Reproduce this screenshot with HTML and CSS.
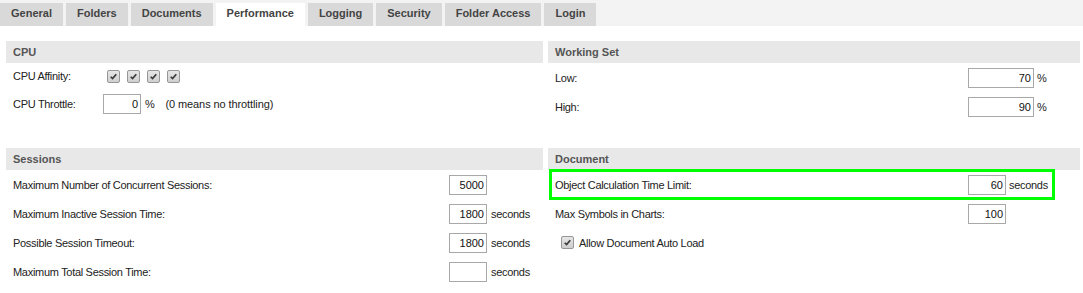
FILE: index.html
```html
<!DOCTYPE html>
<html lang="en">
<head>
    <meta charset="UTF-8">
    <title>Performance</title>
    <link rel="stylesheet" href="styles.css">
</head>
<body>
    <!-- Tabs -->
    <div class="tabs">
        <div class="tab">General</div>
        <div class="tab">Folders</div>
        <div class="tab">Documents</div>
        <div class="tab active">Performance</div>
        <div class="tab">Logging</div>
        <div class="tab">Security</div>
        <div class="tab">Folder Access</div>
        <div class="tab">Login</div>
    </div>

    <div class="panels">
        <!-- CPU -->
        <div class="panel panel-cpu">
            <h2 class="panel-title">CPU</h2>
            <div class="row row-short">
                <span class="label">CPU Affinity:</span>
                <div class="checks">
                    <span class="check"><svg viewBox="0 0 13 13"><path d="M3.2 6.8 L5.4 9 L9.8 3.8"/></svg></span>
                    <span class="check"><svg viewBox="0 0 13 13"><path d="M3.2 6.8 L5.4 9 L9.8 3.8"/></svg></span>
                    <span class="check"><svg viewBox="0 0 13 13"><path d="M3.2 6.8 L5.4 9 L9.8 3.8"/></svg></span>
                    <span class="check"><svg viewBox="0 0 13 13"><path d="M3.2 6.8 L5.4 9 L9.8 3.8"/></svg></span>
                </div>
            </div>
            <div class="row">
                <span class="label">CPU Throttle:</span>
                <span class="field">0</span>
                <span class="unit">%<span class="hint">(0 means no throttling)</span></span>
            </div>
        </div>

        <!-- Working Set -->
        <div class="panel panel-right">
            <h2 class="panel-title">Working Set</h2>
            <div class="row">
                <span class="label">Low:</span>
                <span class="field wide">70</span>
                <span class="unit">%</span>
            </div>
            <div class="row">
                <span class="label">High:</span>
                <span class="field wide">90</span>
                <span class="unit">%</span>
            </div>
        </div>

        <!-- Sessions -->
        <div class="panel panel-sessions">
            <h2 class="panel-title">Sessions</h2>
            <div class="row">
                <span class="label">Maximum Number of Concurrent Sessions:</span>
                <span class="field">5000</span>
                <span class="unit"></span>
            </div>
            <div class="row">
                <span class="label">Maximum Inactive Session Time:</span>
                <span class="field">1800</span>
                <span class="unit">seconds</span>
            </div>
            <div class="row">
                <span class="label">Possible Session Timeout:</span>
                <span class="field">1800</span>
                <span class="unit">seconds</span>
            </div>
            <div class="row">
                <span class="label">Maximum Total Session Time:</span>
                <span class="field"></span>
                <span class="unit">seconds</span>
            </div>
        </div>

        <!-- Document -->
        <div class="panel panel-right">
            <h2 class="panel-title">Document</h2>
            <div class="row marked">
                <span class="label">Object Calculation Time Limit:</span>
                <span class="field">60</span>
                <span class="unit">seconds</span>
                <div class="highlight"></div>
            </div>
            <div class="row">
                <span class="label">Max Symbols in Charts:</span>
                <span class="field">100</span>
                <span class="unit"></span>
            </div>
            <div class="row">
                <label class="checkline">
                    <span class="check"><svg viewBox="0 0 13 13"><path d="M3.2 6.8 L5.4 9 L9.8 3.8"/></svg></span>
                    Allow Document Auto Load
                </label>
            </div>
        </div>
    </div>
</body>
</html>
```

FILE: styles.css
```css
/* General */
body {
    margin: 0;
    padding: 0;
    background: #fff;
    color: #222;
    font-family: "Liberation Sans", Arial, sans-serif;
    font-size: 11px;
}

/* Tabs */
.tabs {
    display: flex;
    align-items: flex-end;
    gap: 3px;
    height: 26px;
    background: #f3f3f3;
    box-sizing: border-box;
    padding-top: 3px;
}

.tab {
    height: 23px;
    line-height: 21px;
    padding: 0 11px;
    background: #d9d9d9;
    color: #444;
    font-weight: bold;
    font-size: 11px;
}

    .tab.active {
        background: #fff;
    }

/* Panels */
.panels {
    display: grid;
    grid-template-columns: 537px 532px;
    column-gap: 5px;
    row-gap: 27px;
    padding: 15px 0 0 6px;
}

.panel-title {
    margin: 0;
    height: 22px;
    line-height: 22px;
    padding-left: 7px;
    background: #e8e8e8;
    color: #555;
    font-size: 11px;
    font-weight: bold;
}

.row {
    display: grid;
    grid-template-columns: 413px auto 1fr;
    align-items: center;
    height: 29px;
    padding-left: 7px;
    position: relative;
    letter-spacing: -0.3px;
}

    .row.row-short {
        height: 26px;
    }

.panel-cpu .row {
    grid-template-columns: 90px auto 1fr;
}

.panel-sessions .row {
    grid-template-columns: 436px auto 1fr;
}

.field {
    display: block;
    box-sizing: border-box;
    width: 38px;
    height: 20px;
    line-height: 18px;
    border: 1px solid #a8a8a8;
    background: #fff;
    text-align: right;
    padding-right: 2px;
    color: #111;
    letter-spacing: 0;
}

    .field.wide {
        width: 66px;
    }

.unit {
    padding-left: 4px;
}

.panel-right .unit {
    padding-left: 3px;
}

.hint {
    padding-left: 11px;
    letter-spacing: -0.1px;
}

/* Checkboxes */
.checks {
    display: flex;
    gap: 7px;
    padding-left: 4px;
}

.check {
    display: inline-block;
    width: 13px;
    height: 13px;
    box-sizing: border-box;
    border: 1px solid #979797;
    border-radius: 2px;
    background: linear-gradient(to bottom, #e6e6e6, #cfcfcf);
}

    .check svg {
        display: block;
        width: 11px;
        height: 11px;
    }

    .check path {
        fill: none;
        stroke: #3a3a3a;
        stroke-width: 2;
    }

.checkline {
    display: flex;
    align-items: center;
    gap: 5px;
    padding-left: 6px;
    grid-column: 1 / 4;
}

/* Highlight box */
.highlight {
    position: absolute;
    left: 1px;
    top: -1px;
    width: 506px;
    height: 31px;
    box-sizing: border-box;
    border: 3px solid #00ff00;
}
```
